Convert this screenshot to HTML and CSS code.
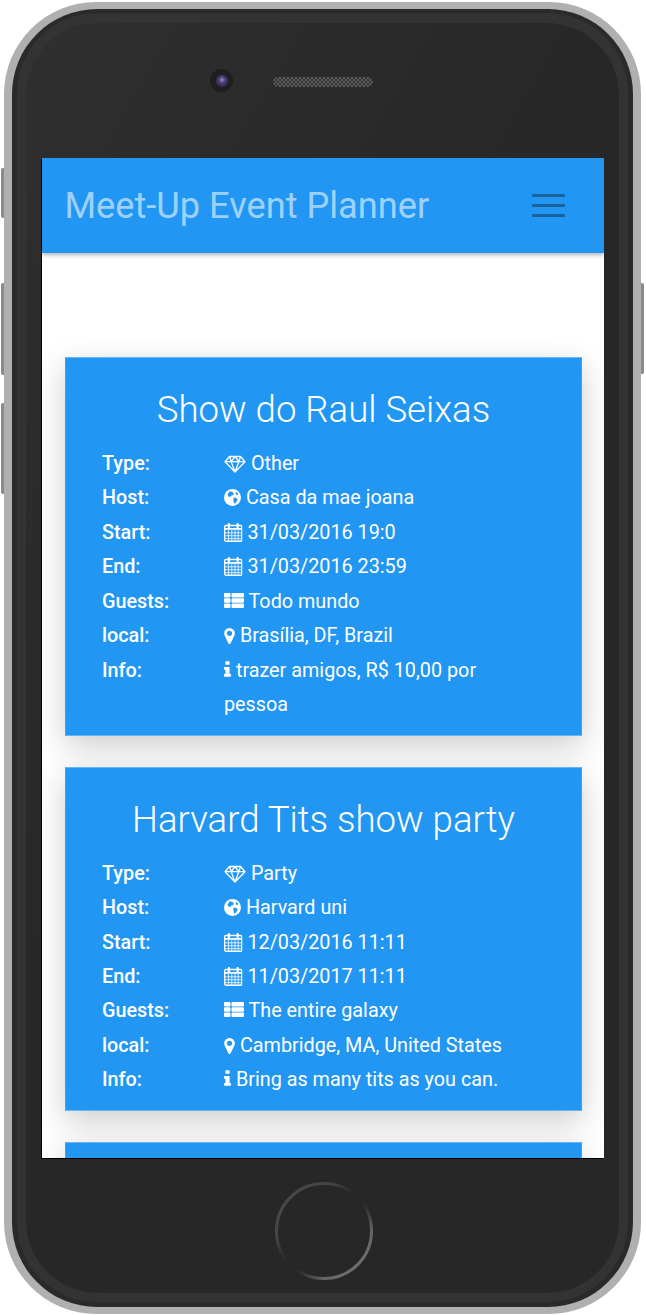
FILE: index.html
```html
<!DOCTYPE html>
<html lang="en">
<head>
    <meta charset="UTF-8">
    <meta name="viewport" content="width=device-width, initial-scale=1.0">
    <title>Meet-Up Event Planner</title>
    <link rel="stylesheet" href="styles.css">
</head>
<body>
    <svg class="sprites" width="0" height="0">
        <symbol id="i-diamond" viewBox="0 0 22 18">
            <path d="M5.5 1.5h11l4.5 5.2L11 17 1 6.7zM1 6.7h20M7.2 6.7L11 17l3.8-10.3M5.5 1.5l1.700 5.200L11 1.500l3.800 5.200 1.700-5.200" fill="none" stroke="#fff" stroke-width="1.300" stroke-linejoin="round"/>
        </symbol>
        <symbol id="i-globe" viewBox="0 0 18 18">
            <circle cx="9" cy="9" r="9" fill="#fff"/>
            <path d="M6 2.500l3 .8 1.500 1.700-1 1.500-2 .3-.8 1.700-2-.5-1-2zM10 9l3 .5 1.500 1.500-2 3.500-1.500 1-1-3zM12.500 2.800l2.500 2-.5 1.700-2-1z" fill="#2196f3"/>
        </symbol>
        <symbol id="i-calendar" viewBox="0 0.500 19 19.300">
            <rect x=".7" y="3" width="17.600" height="16.100" rx="1.300" fill="none" stroke="#fff" stroke-width="1.400"/>
            <path d="M1 6.500h17" stroke="#fff" stroke-width="1.800"/>
            <path d="M4.700 7.500v11.500M8 7.500v11.500M11.300 7.500v11.500M14.600 7.500v11.500M1 10.500h17M1 13.500h17M1 16.500h17" stroke="#fff" stroke-width=".8"/>
            <path d="M5 1.500v3.500M14 1.500v3.500" stroke="#fff" stroke-width="2.200" stroke-linecap="round"/>
        </symbol>
        <symbol id="i-list" viewBox="0 0.500 20 15">
            <path d="M1 .5h4.500a1 1 0 0 1 1 1v2.500a1 1 0 0 1-1 1H1a1 1 0 0 1-1-1V1.500a1 1 0 0 1 1-1zM1 5.800h4.500a1 1 0 0 1 1 1v2.400a1 1 0 0 1-1 1H1a1 1 0 0 1-1-1V6.800a1 1 0 0 1 1-1zM1 11h4.500a1 1 0 0 1 1 1v2.500a1 1 0 0 1-1 1H1a1 1 0 0 1-1-1V12a1 1 0 0 1 1-1zM8.500 .5H19a1 1 0 0 1 1 1v2.500a1 1 0 0 1-1 1H8.500a1 1 0 0 1-1-1V1.500a1 1 0 0 1 1-1zM8.500 5.800H19a1 1 0 0 1 1 1v2.400a1 1 0 0 1-1 1H8.500a1 1 0 0 1-1-1V6.800a1 1 0 0 1 1-1zM8.500 11H19a1 1 0 0 1 1 1v2.500a1 1 0 0 1-1 1H8.500a1 1 0 0 1-1-1V12a1 1 0 0 1 1-1z" fill="#fff"/>
        </symbol>
        <symbol id="i-marker" viewBox="0 128 1024 1536">
            <path d="M768 640q0-106-75-181t-181-75-181 75-75 181 75 181 181 75 181-75 75-181zm256 0q0 109-33 179l-364 774q-16 33-47.500 52t-67.500 19-67.500-19-46.500-52l-365-774q-33-70-33-179 0-212 150-362t362-150 362 150 150 362z" fill="#fff"/>
        </symbol>
        <symbol id="i-info" viewBox="0 128 640 1408">
            <path d="M640 1344v128q0 26-19 45t-45 19h-512q-26 0-45-19t-19-45v-128q0-26 19-45t45-19h64v-384h-64q-26 0-45-19t-19-45v-128q0-26 19-45t45-19h384q26 0 45 19t19 45v576h64q26 0 45 19t19 45zm-128-1152v192q0 26-19 45t-45 19h-256q-26 0-45-19t-19-45v-192q0-26 19-45t45-19h256q26 0 45 19t19 45z" fill="#fff"/>
        </symbol>
        <linearGradient id="ring" x1="0" y1="0" x2="1" y2="1">
            <stop offset="0" stop-color="#4c4c4c"/>
            <stop offset=".3" stop-color="#444"/>
            <stop offset=".47" stop-color="#3a3a3a" stop-opacity="0"/>
            <stop offset=".56" stop-color="#555" stop-opacity="0"/>
            <stop offset=".75" stop-color="#666"/>
            <stop offset="1" stop-color="#777"/>
        </linearGradient>
    </svg>

    <div class="side-btn btn-mute"></div>
    <div class="side-btn btn-up"></div>
    <div class="side-btn btn-down"></div>
    <div class="side-btn btn-power"></div>

    <div class="phone">
        <div class="rim">
            <div class="band">
                <div class="panel">
                    <div class="camera"><span class="lens"></span></div>
                    <div class="speaker"></div>

                    <div class="screen">
                        <header class="navbar">
                            <a class="brand" href="#">Meet-Up Event Planner</a>
                            <button class="burger" type="button" aria-label="Menu">
                                <span></span><span></span><span></span>
                            </button>
                        </header>

                        <main class="events">
                            <section class="card">
                                <h2>Show do Raul Seixas</h2>
                                <dl class="info">
                                    <dt>Type:</dt>
                                    <dd><svg class="ico w-diamond"><use href="#i-diamond"/></svg> Other</dd>
                                    <dt>Host:</dt>
                                    <dd><svg class="ico w-globe"><use href="#i-globe"/></svg> Casa da mae joana</dd>
                                    <dt>Start:</dt>
                                    <dd><svg class="ico w-calendar"><use href="#i-calendar"/></svg> 31/03/2016 19:0</dd>
                                    <dt>End:</dt>
                                    <dd><svg class="ico w-calendar"><use href="#i-calendar"/></svg> 31/03/2016 23:59</dd>
                                    <dt>Guests:</dt>
                                    <dd><svg class="ico w-list"><use href="#i-list"/></svg> Todo mundo</dd>
                                    <dt>local:</dt>
                                    <dd><svg class="ico w-marker"><use href="#i-marker"/></svg> Brasília, DF, Brazil</dd>
                                    <dt>Info:</dt>
                                    <dd><svg class="ico w-info"><use href="#i-info"/></svg> trazer amigos, R$ 10,00 por pessoa</dd>
                                </dl>
                            </section>

                            <section class="card">
                                <h2>Harvard Tits show party</h2>
                                <dl class="info">
                                    <dt>Type:</dt>
                                    <dd><svg class="ico w-diamond"><use href="#i-diamond"/></svg> Party</dd>
                                    <dt>Host:</dt>
                                    <dd><svg class="ico w-globe"><use href="#i-globe"/></svg> Harvard uni</dd>
                                    <dt>Start:</dt>
                                    <dd><svg class="ico w-calendar"><use href="#i-calendar"/></svg> 12/03/2016 11:11</dd>
                                    <dt>End:</dt>
                                    <dd><svg class="ico w-calendar"><use href="#i-calendar"/></svg> 11/03/2017 11:11</dd>
                                    <dt>Guests:</dt>
                                    <dd><svg class="ico w-list"><use href="#i-list"/></svg> The entire galaxy</dd>
                                    <dt>local:</dt>
                                    <dd><svg class="ico w-marker"><use href="#i-marker"/></svg> Cambridge, MA, United States</dd>
                                    <dt>Info:</dt>
                                    <dd><svg class="ico w-info"><use href="#i-info"/></svg> Bring as many tits as you can.</dd>
                                </dl>
                            </section>

                            <section class="card card-empty"></section>
                        </main>
                    </div>

                    <svg class="home" width="100" height="100" viewBox="0 0 100 100">
                        <circle cx="50" cy="50" r="47.500" fill="none" stroke="url(#ring)" stroke-width="3"/>
                    </svg>
                </div>
            </div>
        </div>
    </div>
</body>
</html>
```

FILE: styles.css
```css
* {
    box-sizing: border-box;
}
body {
    margin: 0;
    width: 646px;
    height: 1315px;
    position: relative;
    overflow: hidden;
    background: #fff;
    font-family: Roboto, "Liberation Sans", sans-serif;
}
.sprites {
    position: absolute;
}

/* phone body */
.phone {
    width: 637px;
    height: 1312px;
    margin: 2px 0 0 4px;
    padding: 7px 8px;
    border-radius: 92px;
    background: #b0b0b0;
    position: relative;
}
.rim {
    height: 100%;
    padding: 4px 5px 5px 5px;
    border-radius: 85px;
    background: #2a2a2a;
}
.band {
    height: 100%;
    padding: 10px 9px 9px 9px;
    border-radius: 80px;
    background: #333;
}
.panel {
    height: 100%;
    padding: 135px 15px 0 16px;
    border-radius: 72px;
    background: linear-gradient(120deg, #2f2f2f, #272727 45%);
    position: relative;
}
.side-btn {
    position: absolute;
    left: 1px;
    width: 4px;
    background: #8a8a90;
    border-radius: 2px 0 0 2px;
}
.btn-mute {
    top: 168px;
    height: 50px;
}
.btn-up {
    top: 283px;
    height: 92px;
}
.btn-down {
    top: 403px;
    height: 91px;
}
.btn-power {
    left: 640px;
    top: 283px;
    height: 91px;
    border-radius: 0 2px 2px 0;
}

/* top of the phone */
.camera {
    position: absolute;
    left: 184px;
    top: 46px;
    width: 23px;
    height: 23px;
    border-radius: 50%;
    background: #1f1f1f;
    display: flex;
    align-items: center;
    justify-content: center;
}
.lens {
    width: 12px;
    height: 12px;
    border-radius: 50%;
    background: radial-gradient(circle at 50% 40%, #9a90b0 0, #4a3a78 35%, #241c3c 100%);
}
.speaker {
    position: absolute;
    left: 247px;
    top: 54px;
    width: 100px;
    height: 10px;
    border-radius: 5px;
    background: repeating-conic-gradient(#5c5c5c 0 25%, #333 0 50%) 0 0 / 4px 4px;
}
.home {
    position: absolute;
    left: 248px;
    top: 1158px;
}

/* the page inside the phone */
.screen {
    width: 562px;
    height: 1000px;
    overflow: hidden;
    background: #fff;
    box-shadow: -1px 1px 0 #000;
}
.navbar {
    height: 95px;
    padding: 0 39px 0 22.5px;
    background: #2196f3;
    box-shadow: 0 2px 4px rgba(0, 0, 0, .3);
    display: flex;
    align-items: center;
    justify-content: space-between;
    position: relative;
}
.brand {
    color: rgba(255, 255, 255, .58);
    font-size: 36.2px;
    font-weight: 400;
    text-decoration: none;
}
.burger {
    width: 33px;
    padding: 0;
    border: none;
    background: none;
    display: flex;
    flex-direction: column;
    gap: 7px;
}
.burger span {
    height: 3px;
    border-radius: 1px;
    background: #18639e;
}
.events {
    padding: 104px 22px 0 23px;
    display: flex;
    flex-direction: column;
    gap: 31px;
}
.card {
    flex: none;
    padding: 0 36px 12px;
    background: #2196f3;
    border: 1px solid #3fa3f4;
    border-top-color: #66b5f5;
    border-bottom-color: #66b5f5;
    color: #fff;
    box-shadow: 0 10px 30px rgba(0, 0, 0, .2);
}
.card-empty {
    height: 200px;
}
.card h2 {
    margin: 0;
    height: 89px;
    line-height: 104px;
    font-size: 36.6px;
    font-weight: 300;
    text-align: center;
    white-space: nowrap;
}
.info {
    margin: 0;
    padding-right: 2px;
    display: grid;
    grid-template-columns: 122px 1fr;
    font-size: 19.8px;
    line-height: 34.45px;
}
.info dt {
    font-weight: 500;
}
.info dd {
    margin: 0;
}
.ico {
    height: 18px;
    vertical-align: -3px;
}
.w-diamond {
    width: 22px;
}
.w-globe {
    width: 17px;
    height: 17px;
    vertical-align: -2px;
}
.w-calendar {
    width: 18.5px;
    height: 19px;
    vertical-align: -3px;
}
.w-list {
    width: 20px;
    height: 15px;
    vertical-align: 0;
}
.w-marker {
    width: 11px;
    height: 16px;
    vertical-align: -2px;
}
.w-info {
    width: 7px;
    height: 16px;
    vertical-align: 0;
}
```
